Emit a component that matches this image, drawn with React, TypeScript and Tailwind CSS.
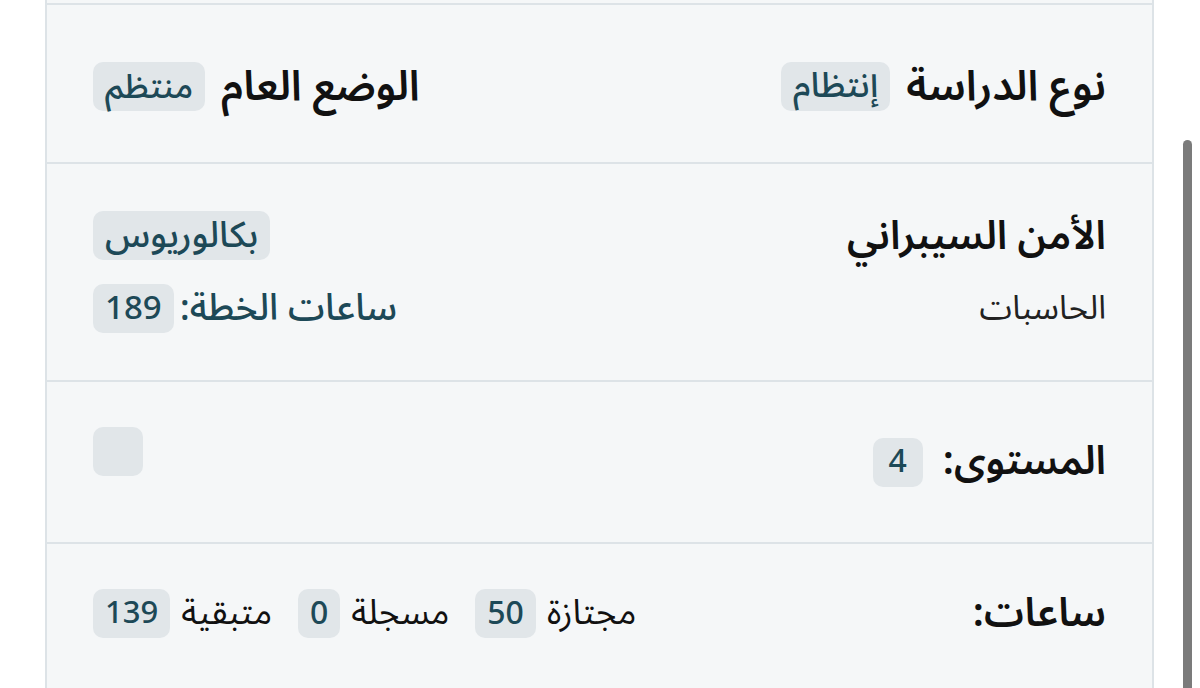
import React from 'react';

const font = { fontFamily: '"Noto Sans Arabic", "Noto Sans", "DejaVu Sans", sans-serif' };

function Badge({ children, className = '' }: { children?: React.ReactNode; className?: string }) {
  return (
    <span
      className={`inline-flex h-[49px] items-center justify-center rounded-[10px] bg-[#e1e6e9] px-[12px] font-medium leading-none text-[#1d4957] ${className}`}
    >
      {children}
    </span>
  );
}

export default function App() {
  return (
    <div className="relative h-[688px] w-[1200px] overflow-hidden bg-white" style={font}>
      <div dir="rtl" className="ml-[45px] w-[1109px] border-x-2 border-[#dde3e7] bg-[#f5f7f8]">
        <div className="h-[3px]" />

        {/* نوع الدراسة / الوضع العام */}
        <div className="flex h-[159px] items-center justify-between border-t-2 border-[#dde3e7] px-[46px] pt-[6px]">
          <div className="flex items-center gap-4">
            <span className="text-[42px] font-semibold leading-none text-[#111]">نوع الدراسة</span>
            <Badge className="text-[35px]">إنتظام</Badge>
          </div>
          <div className="flex items-center gap-4">
            <span className="text-[42px] font-semibold leading-none text-[#111]">الوضع العام</span>
            <Badge className="text-[34px]">منتظم</Badge>
          </div>
        </div>

        {/* التخصص */}
        <div className="flex h-[218px] items-center justify-between border-t-2 border-[#dde3e7] px-[46px]">
          <div className="flex flex-col items-start gap-[22px]">
            <span className="text-[40px] font-semibold leading-[52px] text-[#111]">الأمن السيبراني</span>
            <span className="text-[33px] leading-[48px] text-[#222]">الحاسبات</span>
          </div>
          <div className="flex flex-col items-end gap-[24px]">
            <Badge className="text-[36px]">بكالوريوس</Badge>
            <div className="flex items-center gap-1.5">
              <span className="text-[37px] font-medium leading-none text-[#1d4957]">ساعات الخطة:</span>
              <Badge className="text-[33px] font-bold">189</Badge>
            </div>
          </div>
        </div>

        {/* المستوى */}
        <div className="flex h-[162px] items-center justify-between border-t-2 border-[#dde3e7] px-[46px]">
          <div className="flex items-center gap-5">
            <span className="text-[40px] font-semibold leading-none text-[#111]">المستوى:</span>
            <Badge className="w-[50px] px-0 text-[32px]">4</Badge>
          </div>
          <Badge className="mb-[22px] w-[50px] px-0" />
        </div>

        {/* الساعات */}
        <div className="flex h-[160px] items-start justify-between border-t-2 border-[#dde3e7] px-[46px] pt-[45px]">
          <span className="text-[40px] font-semibold leading-[49px] text-[#111]">ساعات:</span>
          <div className="flex items-center gap-[26px]">
            <div className="flex items-center gap-[11px]">
              <span className="text-[35px] leading-none text-[#111]">مجتازة</span>
              <Badge className="text-[32px]">50</Badge>
            </div>
            <div className="flex items-center gap-[11px]">
              <span className="text-[35px] leading-none text-[#111]">مسجلة</span>
              <Badge className="text-[32px]">0</Badge>
            </div>
            <div className="flex items-center gap-[11px]">
              <span className="text-[35px] leading-none text-[#111]">متبقية</span>
              <Badge className="text-[31px]">139</Badge>
            </div>
          </div>
        </div>
      </div>

      {/* scrollbar */}
      <div className="absolute left-[1183px] top-[140px] h-[560px] w-[9px] rounded-full bg-[#7b7b7b]" />
    </div>
  );
}
